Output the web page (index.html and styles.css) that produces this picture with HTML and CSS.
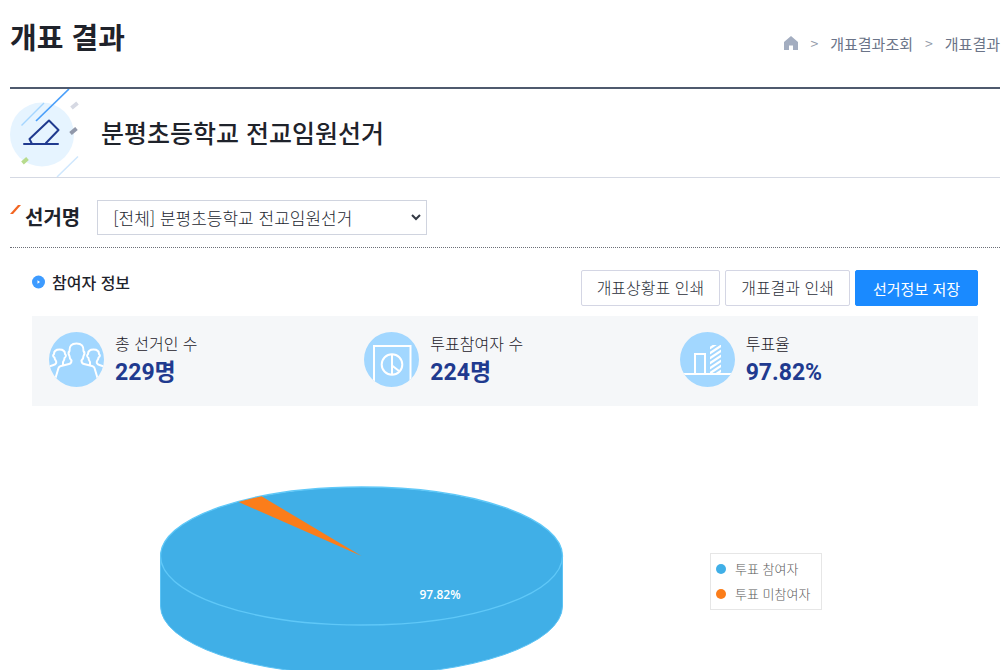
FILE: index.html
```html
<!DOCTYPE html>
<html lang="ko">
<head>
<meta charset="utf-8">
<title>개표 결과</title>
<link rel="stylesheet" href="styles.css">
</head>
<body>
<main class="page">
  <header class="page-header">
    <h1 class="page-title">개표 결과</h1>
    <nav class="breadcrumb" aria-label="현재 위치">
      <a href="#" aria-label="홈"><svg class="home" viewBox="0 0 14 14"><path d="M7 0 14 6V14H9V9.500H5V14H0V6Z" fill="#a3adc0"/></svg></a>
      <span class="sep">&gt;</span>
      <a href="#">개표결과조회</a>
      <span class="sep">&gt;</span>
      <a href="#">개표결과</a>
    </nav>
  </header>

  <section class="banner">
    <svg class="banner-art" viewBox="0 0 70 88">
      <circle cx="32" cy="45.500" r="32" fill="#e6f4ff"/>
      <g fill="none">
        <path d="M11.500 36.500 34 14" stroke="#a5d6ff" stroke-width="1.500"/>
        <path d="M26 32 59 0" stroke="#4a9ffa" stroke-width="1.700"/>
        <path d="M47 88 68 67.500" stroke="#cfe7fd" stroke-width="1.500"/>
        <g stroke-width="4">
          <path d="m61.500 19 6-5" stroke="#d6d9e3"/>
          <path d="m60.500 44.500 6-5" stroke="#9198aa"/>
          <path d="m12.500 74 5-4.500" stroke="#b7db8d"/>
        </g>
        <path d="M14 55H48M22 55 19.500 50 39 31.500 48.500 41 36 54" stroke="#203a8f" stroke-width="2" stroke-linecap="round" stroke-linejoin="round"/>
      </g>
    </svg>
    <h2 class="banner-title">분평초등학교 전교임원선거</h2>
  </section>

  <form class="filter">
    <svg class="slash" viewBox="0 0 11 9"><path d="M0 9 8 0H11L3 9Z" fill="#f26522"/></svg>
    <label class="filter-label" for="election">선거명</label>
    <div class="select-wrap">
      <select id="election" class="select"><option>[전체] 분평초등학교 전교임원선거</option></select>
      <svg class="chevron" viewBox="0 0 10 7"><path d="m1 1 4 4 4-4" fill="none" stroke="#333944" stroke-width="2"/></svg>
    </div>
  </form>

  <section class="content">
    <div class="toolbar">
      <h3 class="section-title"><svg class="bullet" viewBox="0 0 14 14"><circle cx="6.500" cy="7" r="6.500" fill="#3d9bff"/><path d="M5.500 5.200 8 7l-2.500 1.800Z" fill="#fff"/></svg>참여자 정보</h3>
      <div class="buttons">
        <button type="button" class="btn">개표상황표 인쇄</button>
        <button type="button" class="btn">개표결과 인쇄</button>
        <button type="button" class="btn btn-primary">선거정보 저장</button>
      </div>
    </div>

    <dl class="stats">
      <div class="stat">
        <svg class="stat-icon" viewBox="0 0 55 55">
          <defs><clipPath id="disc"><circle cx="27.500" cy="27.500" r="27.500"/></clipPath></defs>
          <circle cx="27.500" cy="27.500" r="27.500" fill="#a2d7ff"/>
          <g clip-path="url(#disc)" fill="none" stroke="#fff" stroke-width="2" stroke-linejoin="round">
            <path d="M6.500 46 9.500 36Q10 34.500 12 34L20 32Q22.500 31.500 22.500 28.500Q20.500 26.500 20.500 24Q18.500 21 20.500 19Q20 11.500 27.500 11.500T34.500 19Q36.500 21 34.500 24Q34.500 26.500 32.500 28.500Q32.500 31.500 35 32L43 34Q45 34.500 45.500 36L48.500 46"/>
            <path d="M0 34.500 4.500 33Q8 32 7 29Q5.500 27 5.500 25.500Q3 24 5 22Q5 17.500 10.500 17.500T16 22Q18 24 15.500 26Q15.500 28 14 30L14 33"/>
            <path d="M55 34.500 50.500 33Q47 32 48 29Q49.500 27 49.500 25.500Q52 24 50 22Q50 17.500 44.500 17.500T39 22Q37 24 39.500 26Q39.500 28 41 30L41 33"/>
          </g>
        </svg>
        <div><dt>총 선거인 수</dt><dd>229명</dd></div>
      </div>
      <div class="stat">
        <svg class="stat-icon" viewBox="0 0 55 55">
          <circle cx="27.500" cy="27.500" r="27.500" fill="#a2d7ff"/>
          <g clip-path="url(#disc)" fill="none" stroke="#fff" stroke-width="2">
            <path d="M10 55V14H46.500V55"/>
            <circle cx="28" cy="32.500" r="10.300"/>
            <path d="M28 22V43M28 33.500 35 39"/>
          </g>
        </svg>
        <div><dt>투표참여자 수</dt><dd>224명</dd></div>
      </div>
      <div class="stat">
        <svg class="stat-icon" viewBox="0 0 55 55">
          <defs><clipPath id="tower"><path d="M30 13H41V42H30Z"/></clipPath></defs>
          <circle cx="27.500" cy="27.500" r="27.500" fill="#a2d7ff"/>
          <g clip-path="url(#disc)" fill="none" stroke="#fff" stroke-width="2">
            <path d="M0 42H55M15 42V22H25V42"/>
          </g>
          <path clip-path="url(#tower)" d="M28 17.500 43 7.500M28 22.500 43 12.500M28 27.500 43 17.500M28 32.500 43 22.500M28 37.500 43 27.500M28 42.500 43 32.500M28 47.500 43 37.500" stroke="#fff" stroke-width="2.300"/>
        </svg>
        <div><dt>투표율</dt><dd>97.82%</dd></div>
      </div>
    </dl>

    <div class="chart">
      <svg class="pie" viewBox="0 0 404 190" role="img" aria-label="투표율 원형 차트">
        <path d="M.500 70V120A201 69 0 0 0 402.500 120V70Z" fill="#40afe7"/>
        <path d="M.500 70V120A201 69 0 0 0 402.500 120V70" fill="none" stroke="#5cc3f5"/>
        <ellipse cx="201.500" cy="70" rx="201" ry="69" fill="#40afe7" stroke="#5fc8f8" stroke-width="1.300"/>
        <path d="M201.500 70 78.500 16Q90 13 101.500 10.300Z" fill="#fb7d1a"/>
        <text class="pie-label" x="280" y="113" text-anchor="middle">97.82%</text>
      </svg>
      <ul class="legend">
        <li><span class="dot dot-voted"></span>투표 참여자</li>
        <li><span class="dot dot-missed"></span>투표 미참여자</li>
      </ul>
    </div>
  </section>
</main>
</body>
</html>
```
FILE: styles.css
```css
* { box-sizing: border-box; }

body {
  margin: 0;
  background: #fff;
  color: #1f232b;
  font-family: "Noto Sans CJK KR", sans-serif;
  font-size: 16px;
}

h1, h2, h3, dl, dd, ul { margin: 0; padding: 0; }
svg { display: block; flex: none; }

.page { padding: 0 3px 0 10px; }

.page-header {
  display: flex;
  justify-content: space-between;
  height: 89px;
  border-bottom: 2px solid #4f5a6e;
}
.page-title { font-size: 29px; line-height: 40px; padding-top: 16px; }

.breadcrumb {
  display: flex;
  align-items: center;
  gap: 12px;
  height: 24px;
  margin-top: 31px;
  font-size: 15px;
  color: #6b7488;
}
.breadcrumb a { color: inherit; text-decoration: none; }
.home { width: 14px; height: 14px; }
.sep { font-size: 14px; color: #9299a8; }

.banner {
  display: flex;
  align-items: center;
  gap: 21px;
  height: 89px;
  border-bottom: 1px solid #d5d9e3;
}
.banner-art { width: 70px; height: 88px; }
.banner-title { font-size: 25px; line-height: 36px; font-weight: 500; padding-bottom: 3px; }

.filter {
  display: flex;
  align-items: center;
  height: 70px;
  padding-top: 9px;
  border-bottom: 1px dotted #6c6f77;
}
.slash { width: 11px; height: 9px; margin: 0 4px 16px 0; }
.filter-label { font-size: 20px; line-height: 28px; font-weight: 700; }
.select-wrap { position: relative; margin-left: 17px; width: 330px; }
.select {
  appearance: none;
  display: block;
  width: 100%;
  height: 35px;
  padding: 0 24px 0 15px;
  border: 1px solid #d0d4df;
  border-radius: 0;
  background: #fff;
  color: #22262f;
  font: 300 17px "Noto Sans CJK KR", sans-serif;
}
.chevron { position: absolute; right: 6px; top: 14px; width: 10px; height: 7px; pointer-events: none; }

.content { padding: 22px 22px 0; }

.toolbar { display: flex; justify-content: space-between; height: 46px; }
.section-title {
  display: flex;
  align-items: center;
  gap: 6px;
  height: 24px;
  font-size: 16px;
  line-height: 22px;
  font-weight: 500;
}
.bullet { width: 14px; height: 14px; }
.buttons { display: flex; gap: 5px; height: 36px; }
.btn {
  padding: 0 15px 2px;
  border: 1px solid #d4d6e4;
  border-radius: 2px;
  background: #fff;
  color: #2b303a;
  font: 300 16px "Noto Sans CJK KR", sans-serif;
}
.btn-primary { padding: 0 17px; border-color: #1a8aff; background: #1a8aff; color: #fff; font-size: 15px; font-weight: 400; }

.stats {
  display: grid;
  grid-template-columns: repeat(3, 1fr);
  height: 90px;
  padding-top: 16px;
  background: #f5f7f9;
}
.stat { display: flex; gap: 11px; padding-left: 17px; }
.stat-icon { width: 55px; height: 55px; }
.stat dt { font-size: 16px; line-height: 22px; font-weight: 300; color: #1c2029; }
.stat dd { font-family: Roboto, "Noto Sans CJK KR", sans-serif; font-size: 23px; line-height: 38px; font-weight: 700; color: #203a8f; }

.chart { display: flex; padding: 80px 0 0 128px; }
.pie { width: 404px; height: 190px; }
.pie-label { font: 600 12px "Open Sans", sans-serif; fill: #fff; }
.legend {
  list-style: none;
  align-self: flex-start;
  margin: 67px 0 0 146px;
  padding: 2px 11px 3px 5px;
  border: 1px solid #e6e6e6;
  font-size: 13px;
  line-height: 25px;
  color: #5a5a5a;
  font-weight: 300;
}
.legend li { display: flex; align-items: center; gap: 9px; }
.dot { width: 10px; height: 10px; border-radius: 50%; }
.dot-voted { background: #40afe7; }
.dot-missed { background: #fb7d1a; }
```
